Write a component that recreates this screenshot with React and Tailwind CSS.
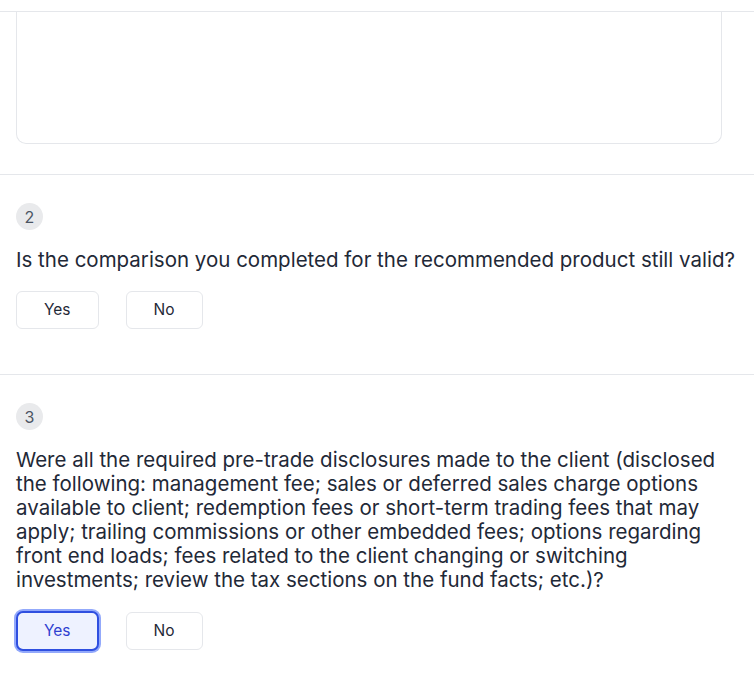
import { useState } from "react";

const Badge = ({ n }) => (
  <div className="flex h-[27px] w-[27px] items-center justify-center rounded-full bg-[#e9eaec] text-[16px] text-[#4b5563]">
    {n}
  </div>
);

const Choice = ({ label, selected, onClick }) => (
  <button
    onClick={onClick}
    className={
      selected
        ? "h-[40px] rounded-[7px] border-2 border-[#2f4fe0] bg-[#eef2ff] px-[26px] text-[15.5px] text-[#2f3fd0] ring-2 ring-[#93a9fb]"
        : "h-[38px] rounded-[6px] border border-[#e5e7eb] bg-white px-[27px] text-[15.5px] text-[#1f2937]"
    }
  >
    {label}
  </button>
);

const Question = ({ n, text, value, onChange }) => (
  <section className="border-t border-[#e5e7eb] px-4 pt-[28px] pb-[45px]">
    <Badge n={n} />
    <p className="mt-[18px] text-[20.5px] leading-6 text-[#1f2937]">{text}</p>
    <div className="mt-[19px] flex items-center gap-[27px]">
      <Choice label="Yes" selected={value === "yes"} onClick={() => onChange("yes")} />
      <Choice label="No" selected={value === "no"} onClick={() => onChange("no")} />
    </div>
  </section>
);

export default function App() {
  const [answers, setAnswers] = useState({ 2: null, 3: "yes" });

  return (
    <div className="min-h-[692px] bg-white" style={{ fontFamily: "Inter, 'Noto Sans', sans-serif" }}>
      {/* first question, scrolled off */}
      <div className="h-[12px] border-b border-[#e5e7eb]" />
      <div className="px-4 pb-[30px]">
        <div className="mr-[16px] h-[132px] rounded-b-[10px] border-x border-b border-[#e5e7eb]" />
      </div>

      <Question
        n={2}
        text="Is the comparison you completed for the recommended product still valid?"
        value={answers[2]}
        onChange={(v) => setAnswers({ ...answers, 2: v })}
      />
      <Question
        n={3}
        text="Were all the required pre-trade disclosures made to the client (disclosed the following: management fee; sales or deferred sales charge options available to client; redemption fees or short-term trading fees that may apply; trailing commissions or other embedded fees; options regarding front end loads; fees related to the client changing or switching investments; review the tax sections on the fund facts; etc.)?"
        value={answers[3]}
        onChange={(v) => setAnswers({ ...answers, 3: v })}
      />
    </div>
  );
}
